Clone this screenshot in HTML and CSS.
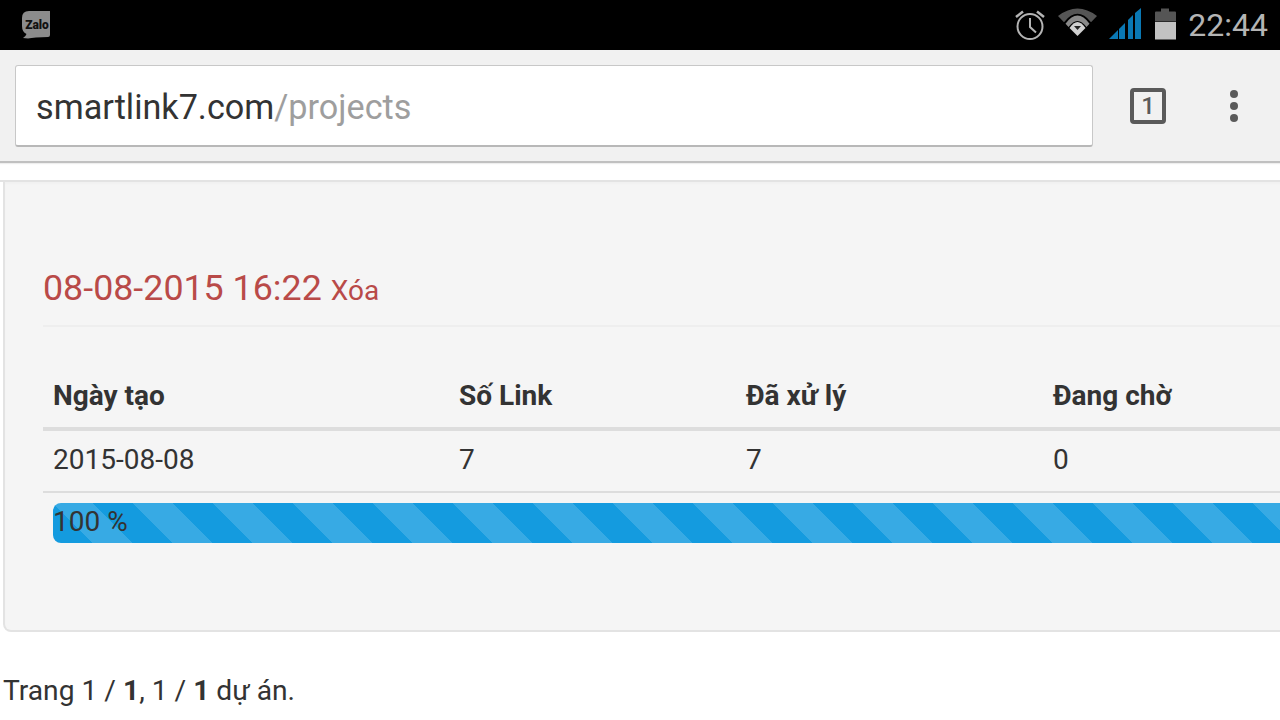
FILE: index.html
```html
<!DOCTYPE html>
<html lang="vi">
<head>
  <meta charset="UTF-8">
  <title>smartlink7.com/projects</title>
  <link rel="stylesheet" href="styles.css">
</head>
<body>
  <div id="statusbar">
    <svg class="zalo" width="30" height="30" viewBox="0 0 30 30">
      <path d="M8 1H29V25Q29 27 27 27L15 27.500Q10 28 7 28.500L2 28Q5 26 5.500 24Q1 22 1 16V8Q1 1 8 1Z" fill="#8c8c8c"/>
      <text x="16" y="19" class="zalotext" text-anchor="middle">Zalo</text>
    </svg>
    <div class="statusicons">
      <svg class="alarm" width="34" height="34" viewBox="0 0 34 34" fill="none" stroke="#b4b4b4">
        <circle cx="17" cy="18.500" r="12.500" stroke-width="2"/>
        <path d="M17 10V19L23 24.500" stroke-width="2"/>
        <path d="M3 9L10 3.500M31 9L24 3.500" stroke-width="2.500"/>
      </svg>
      <svg class="wifi" width="39" height="34" viewBox="0 0 39 34">
        <path d="M0 8Q19.500 -7 39 8L33 14.200Q19.500 -2.500 6 14.200Z" fill="#555"/>
        <path d="M7.500 15.700Q19.500 -0.700 31.500 15.700L28.500 19Q19.500 7 10.500 19Z" fill="#8a8a8a"/>
        <path d="M11.500 20Q19.500 8 27.500 20L19.500 28Z" fill="#d0d0d0"/>
        <path d="M16 18H23L19.500 22Z" fill="#222"/>
      </svg>
      <svg class="signal" width="32" height="34" viewBox="0 0 32 34" fill="#0a78b4">
        <path d="M0 31L9 22V31Z"/>
        <path d="M10 21L16 15V31H10Z"/>
        <path d="M19 12L24 7V31H19Z"/>
        <path d="M26 5L32 0V31H26Z"/>
      </svg>
      <svg class="battery" width="21" height="34" viewBox="0 0 21 34">
        <path d="M6 0.500H14V3.500H20Q21 3.500 21 4.500V13.500H0V4.500Q0 3.500 1 3.500H6Z" fill="#555"/>
        <rect y="14" width="21" height="17.500" fill="#c2c2c2"/>
      </svg>
      <span class="clock">22:44</span>
    </div>
  </div>

  <div id="toolbar">
    <div class="urlbar"><span class="host">smartlink7.com</span><span class="path">/projects</span></div>
    <div class="tabcount"><span>1</span></div>
    <div class="menudots"><i></i><i></i><i></i></div>
  </div>

  <div id="content">
    <div class="topline"></div>
    <div class="well">
      <h1 class="title">08-08-2015 16:22 <small>Xóa</small></h1>
      <table class="projects">
        <thead>
          <tr><th class="c1">Ngày tạo</th><th class="c2">Số Link</th><th class="c3">Đã xử lý</th><th class="c4">Đang chờ</th></tr>
        </thead>
        <tbody>
          <tr><td>2015-08-08</td><td>7</td><td>7</td><td>0</td></tr>
        </tbody>
      </table>
      <div class="progress">100 %</div>
    </div>
    <p class="pager">Trang 1 / <b>1</b>, 1 / <b>1</b> dự án.</p>
  </div>
</body>
</html>
```

FILE: styles.css
```css
html, body{
  margin: 0px;
  padding: 0px;
  height: 720px;
  overflow: hidden;
  background: #fff;
  font-family: Roboto, "Noto Sans", sans-serif;
  color: #333;
}

#statusbar{
  height: 50px;
  background: #000;
  display: flex;
  justify-content: space-between;
  align-items: center;
  box-sizing: border-box;
  padding: 0px 12px 0px 21px;
}
.zalo{
  display: block;
  margin-top: -1px;
}
.zalotext{
  font-family: Roboto, sans-serif;
  font-size: 12px;
  font-weight: 900;
  fill: #111;
}
.statusicons{
  display: flex;
  align-items: center;
}
.statusicons svg{
  display: block;
}
.alarm{
  margin-right: 11px;
}
.wifi{
  margin-right: 12px;
}
.signal{
  margin-right: 14px;
}
.battery{
  margin-right: 12px;
}
.clock{
  color: #b4b4b4;
  font-size: 32px;
  line-height: 50px;
}

#toolbar{
  height: 113px;
  box-sizing: border-box;
  background: #f1f1f1;
  border-bottom: 2px solid #c0c0c0;
  box-shadow: 0px 1px 1px #eee;
  display: flex;
  align-items: flex-start;
  padding: 15px 0px 0px 15px;
}
.urlbar{
  width: 1078px;
  height: 82px;
  box-sizing: border-box;
  background: #fff;
  border: 1px solid #c8c8c8;
  border-bottom: 2px solid #b8b8b8;
  border-radius: 3px;
  font-size: 34.200px;
  line-height: 83px;
  padding-left: 20px;
}
.host{
  color: #333;
}
.path{
  color: #9e9e9e;
}
.tabcount{
  width: 36px;
  height: 36px;
  box-sizing: border-box;
  border: 4px solid #5a5a5a;
  border-radius: 4px;
  margin: 23px 0px 0px 37px;
  display: flex;
  align-items: center;
  justify-content: center;
  color: #5a5a5a;
  font-size: 24px;
  font-weight: 500;
}
.menudots{
  margin: 25px 0px 0px 64px;
  display: flex;
  flex-direction: column;
  gap: 4px;
}
.menudots i{
  display: block;
  width: 8px;
  height: 8px;
  border-radius: 50%;
  background: #5a5a5a;
}

#content{
  padding-top: 17px;
  overflow: hidden;
}
.topline{
  height: 2px;
  background: #e3e3e3;
}
.well{
  width: 1400px;
  height: 450px;
  box-sizing: border-box;
  margin-left: 3px;
  background: #f5f5f5;
  border: 2px solid #e3e3e3;
  border-top: none;
  border-radius: 0px 0px 0px 8px;
  box-shadow: inset 0px 2px 2px rgba(0,0,0,.02);
  padding: 0px 38px;
}
.title{
  margin: 0px;
  padding: 86px 0px 14px;
  border-bottom: 2px solid #eee;
  color: #b94a48;
  font-size: 35.800px;
  font-weight: 400;
  line-height: 40px;
}
.title small{
  font-size: 28px;
  color: inherit;
}

.projects{
  border-collapse: collapse;
  table-layout: fixed;
  width: 1400px;
  margin-top: 40px;
  font-size: 28px;
}
.projects th{
  text-align: left;
  font-weight: 700;
  padding: 9px 10px 11px;
  line-height: 40px;
  border-bottom: 4px solid #ddd;
}
.projects td{
  padding: 9px 10px 11px;
  line-height: 40px;
  border-bottom: 2px solid #ddd;
}
.c1{
  width: 386px;
}
.c2{
  width: 267px;
}
.c3{
  width: 287px;
}

.progress{
  margin: 10px 0px 0px 10px;
  width: 1400px;
  height: 40px;
  border-radius: 8px;
  font-size: 28px;
  line-height: 37px;
  color: #333;
  background-color: #149bdf;
  background-image: linear-gradient(45deg, transparent 25%, rgba(255,255,255,.15) 25%, rgba(255,255,255,.15) 50%, transparent 50%, transparent 75%, rgba(255,255,255,.15) 75%);
  background-size: 80px 80px;
  background-position: 40px 0px;
}

.pager{
  margin: 39px 0px 0px 3px;
  font-size: 28.200px;
  line-height: 40px;
}
```
